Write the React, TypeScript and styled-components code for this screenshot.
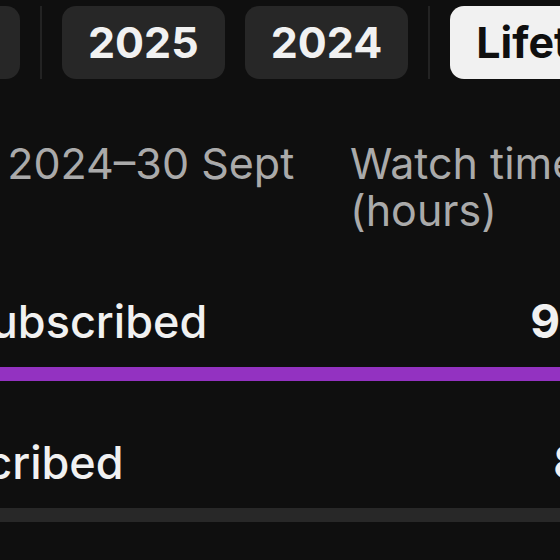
import styled, { createGlobalStyle } from "styled-components";

const GlobalStyle = createGlobalStyle`
  html, body {
    margin: 0;
    padding: 0;
    background: #0f0f0f;
  }
  body {
    font-family: Inter, "Noto Sans", "Liberation Sans", sans-serif;
    overflow: hidden;
  }
`;

const Screen = styled.div`
  width: 560px;
  height: 560px;
  overflow: hidden;
  background: #0f0f0f;
  color: #f1f1f1;
`;

const ChipBar = styled.div`
  display: flex;
  align-items: stretch;
  gap: 20px;
  height: 73px;
  padding-top: 6px;
`;

// holds the chips scrolled off to the left; they overflow past the start edge
const Leading = styled.div`
  flex: none;
  width: 20px;
  display: flex;
  justify-content: flex-end;
  gap: 20px;
`;

const Chip = styled.button<{ $active?: boolean }>`
  flex: none;
  display: flex;
  align-items: center;
  height: 100%;
  padding: 0 26px;
  border: 0;
  border-radius: 14px;
  background: ${({ $active }) => ($active ? "#f1f1f1" : "#272727")};
  color: ${({ $active }) => ($active ? "#0f0f0f" : "#f1f1f1")};
  font: 700 43px/1 Inter, "Liberation Sans", sans-serif;
  white-space: nowrap;
`;

const Divider = styled.div`
  flex: none;
  width: 2px;
  background: #232323;
`;

const Table = styled.div`
  width: 785px;
  margin-left: -132px;
`;

const HeaderRow = styled.div`
  display: grid;
  grid-template-columns: 482px 1fr;
  margin-top: 61px;
  font: 400 43px/47px Inter, "Liberation Sans", sans-serif;
  color: #aaaaaa;
`;

const DateCell = styled.div`
  margin-left: 26px;
`;

const RowList = styled.div`
  display: flex;
  flex-direction: column;
  gap: 53px;
  margin-top: 59px;
  padding-left: 10px;
`;

const Row = styled.div`
  display: flex;
  flex-direction: column;
  gap: 17px;
`;

const RowLine = styled.div`
  display: flex;
  justify-content: space-between;
  align-items: baseline;
  line-height: 56px;
  font-size: 45px;
`;

const Label = styled.span`
  font-weight: 500;
  color: #f1f1f1;
`;

const Value = styled.span`
  font-weight: 700;
  font-size: 46px;
  color: #f1f1f1;
`;

const Track = styled.div`
  height: 14px;
  background: #282828;
`;

const Fill = styled.div`
  height: 100%;
  background: #9332c1;
`;

const rows = [
  { label: "Not subscribed", value: "9,413", share: 92 },
  { label: "Subscribed", value: "8,111", share: 4 },
];

export default function App() {
  return (
    <Screen>
      <GlobalStyle />
      <ChipBar>
        <Leading>
          <Chip>Last 365 days</Chip>
        </Leading>
        <Divider />
        <Chip>2025</Chip>
        <Chip>2024</Chip>
        <Divider />
        <Chip $active>Lifetime</Chip>
      </ChipBar>
      <Table>
        <HeaderRow>
          <DateCell>1 Oct 2024–30 Sept 2025</DateCell>
          <div>Watch time (hours)</div>
        </HeaderRow>
        <RowList>
          {rows.map((r) => (
            <Row key={r.label}>
              <RowLine>
                <Label>{r.label}</Label>
                <Value>{r.value}</Value>
              </RowLine>
              <Track>
                <Fill style={{ width: `${r.share}%` }} />
              </Track>
            </Row>
          ))}
        </RowList>
      </Table>
    </Screen>
  );
}
